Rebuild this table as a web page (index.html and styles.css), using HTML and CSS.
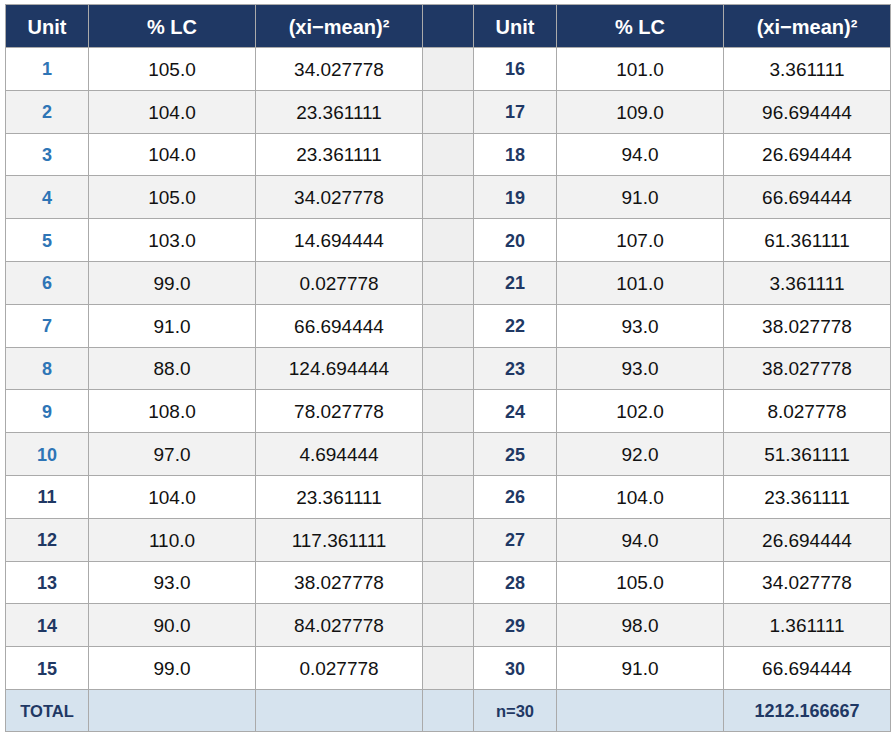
FILE: index.html
```html
<!DOCTYPE html>
<html>
<head>
<meta charset="utf-8">
<link rel="stylesheet" href="styles.css">
</head>
<body>
<table class="data">
  <colgroup>
    <col class="c-unit"><col class="c-lc"><col class="c-dev"><col class="c-gap"><col class="c-unit"><col class="c-lc"><col class="c-dev">
  </colgroup>
  <thead>
    <tr class="head">
      <th>Unit</th><th>% LC</th><th>(xi−mean)²</th><th class="gap"></th><th>Unit</th><th>% LC</th><th>(xi−mean)²</th>
    </tr>
  </thead>
  <tbody>
    <tr><td class="u lt">1</td><td>105.0</td><td>34.027778</td><td class="gap"></td><td class="u">16</td><td>101.0</td><td>3.361111</td></tr>
    <tr><td class="u lt">2</td><td>104.0</td><td>23.361111</td><td class="gap"></td><td class="u">17</td><td>109.0</td><td>96.694444</td></tr>
    <tr><td class="u lt">3</td><td>104.0</td><td>23.361111</td><td class="gap"></td><td class="u">18</td><td>94.0</td><td>26.694444</td></tr>
    <tr><td class="u lt">4</td><td>105.0</td><td>34.027778</td><td class="gap"></td><td class="u">19</td><td>91.0</td><td>66.694444</td></tr>
    <tr><td class="u lt">5</td><td>103.0</td><td>14.694444</td><td class="gap"></td><td class="u">20</td><td>107.0</td><td>61.361111</td></tr>
    <tr><td class="u lt">6</td><td>99.0</td><td>0.027778</td><td class="gap"></td><td class="u">21</td><td>101.0</td><td>3.361111</td></tr>
    <tr><td class="u lt">7</td><td>91.0</td><td>66.694444</td><td class="gap"></td><td class="u">22</td><td>93.0</td><td>38.027778</td></tr>
    <tr><td class="u lt">8</td><td>88.0</td><td>124.694444</td><td class="gap"></td><td class="u">23</td><td>93.0</td><td>38.027778</td></tr>
    <tr><td class="u lt">9</td><td>108.0</td><td>78.027778</td><td class="gap"></td><td class="u">24</td><td>102.0</td><td>8.027778</td></tr>
    <tr><td class="u lt">10</td><td>97.0</td><td>4.694444</td><td class="gap"></td><td class="u">25</td><td>92.0</td><td>51.361111</td></tr>
    <tr><td class="u">11</td><td>104.0</td><td>23.361111</td><td class="gap"></td><td class="u">26</td><td>104.0</td><td>23.361111</td></tr>
    <tr><td class="u">12</td><td>110.0</td><td>117.361111</td><td class="gap"></td><td class="u">27</td><td>94.0</td><td>26.694444</td></tr>
    <tr><td class="u">13</td><td>93.0</td><td>38.027778</td><td class="gap"></td><td class="u">28</td><td>105.0</td><td>34.027778</td></tr>
    <tr><td class="u">14</td><td>90.0</td><td>84.027778</td><td class="gap"></td><td class="u">29</td><td>98.0</td><td>1.361111</td></tr>
    <tr><td class="u">15</td><td>99.0</td><td>0.027778</td><td class="gap"></td><td class="u">30</td><td>91.0</td><td>66.694444</td></tr>
  </tbody>
  <tfoot>
    <tr class="total">
      <td class="lbl">TOTAL</td><td></td><td></td><td></td><td class="lbl">n=30</td><td></td><td class="sum">1212.166667</td>
    </tr>
  </tfoot>
</table>
</body>
</html>
```
FILE: styles.css
```css
html, body {
  margin: 0;
  padding: 0;
  background: #ffffff;
}
body {
  padding: 4px 5px;
  font-family: "Liberation Sans", Arial, sans-serif;
}
.data {
  border-collapse: collapse;
  table-layout: fixed;
  width: 886px;
  color: #111111;
}
.c-unit { width: 83px; }
.c-lc { width: 167px; }
.c-dev { width: 167px; }
.c-gap { width: 51px; }
.data th, .data td {
  border: 1px solid #aaaaaa;
  text-align: center;
  vertical-align: middle;
  padding: 2px 0 0 0;
  box-sizing: border-box;
}
.head th {
  background: #1f3864;
  color: #ffffff;
  font-weight: bold;
  font-size: 20px;
  height: 43px;
}
.data tbody tr { height: 42.8px; }
.data tbody td {
  font-size: 19px;
  background: #ffffff;
}
.data tbody tr:nth-child(even) td { background: #f2f2f2; }
.data tbody td.gap,
.data tbody tr:nth-child(even) td.gap { background: #efefef; }
.data tbody td.u {
  font-size: 18px;
  font-weight: bold;
  color: #1f3864;
}
.data tbody td.u.lt { color: #2e75b6; }
.total td {
  background: #d6e3ee;
  height: 42px;
  color: #1f3864;
  font-weight: bold;
}
.total td.lbl { font-size: 16.5px; }
.total td.sum { font-size: 18px; }
```
